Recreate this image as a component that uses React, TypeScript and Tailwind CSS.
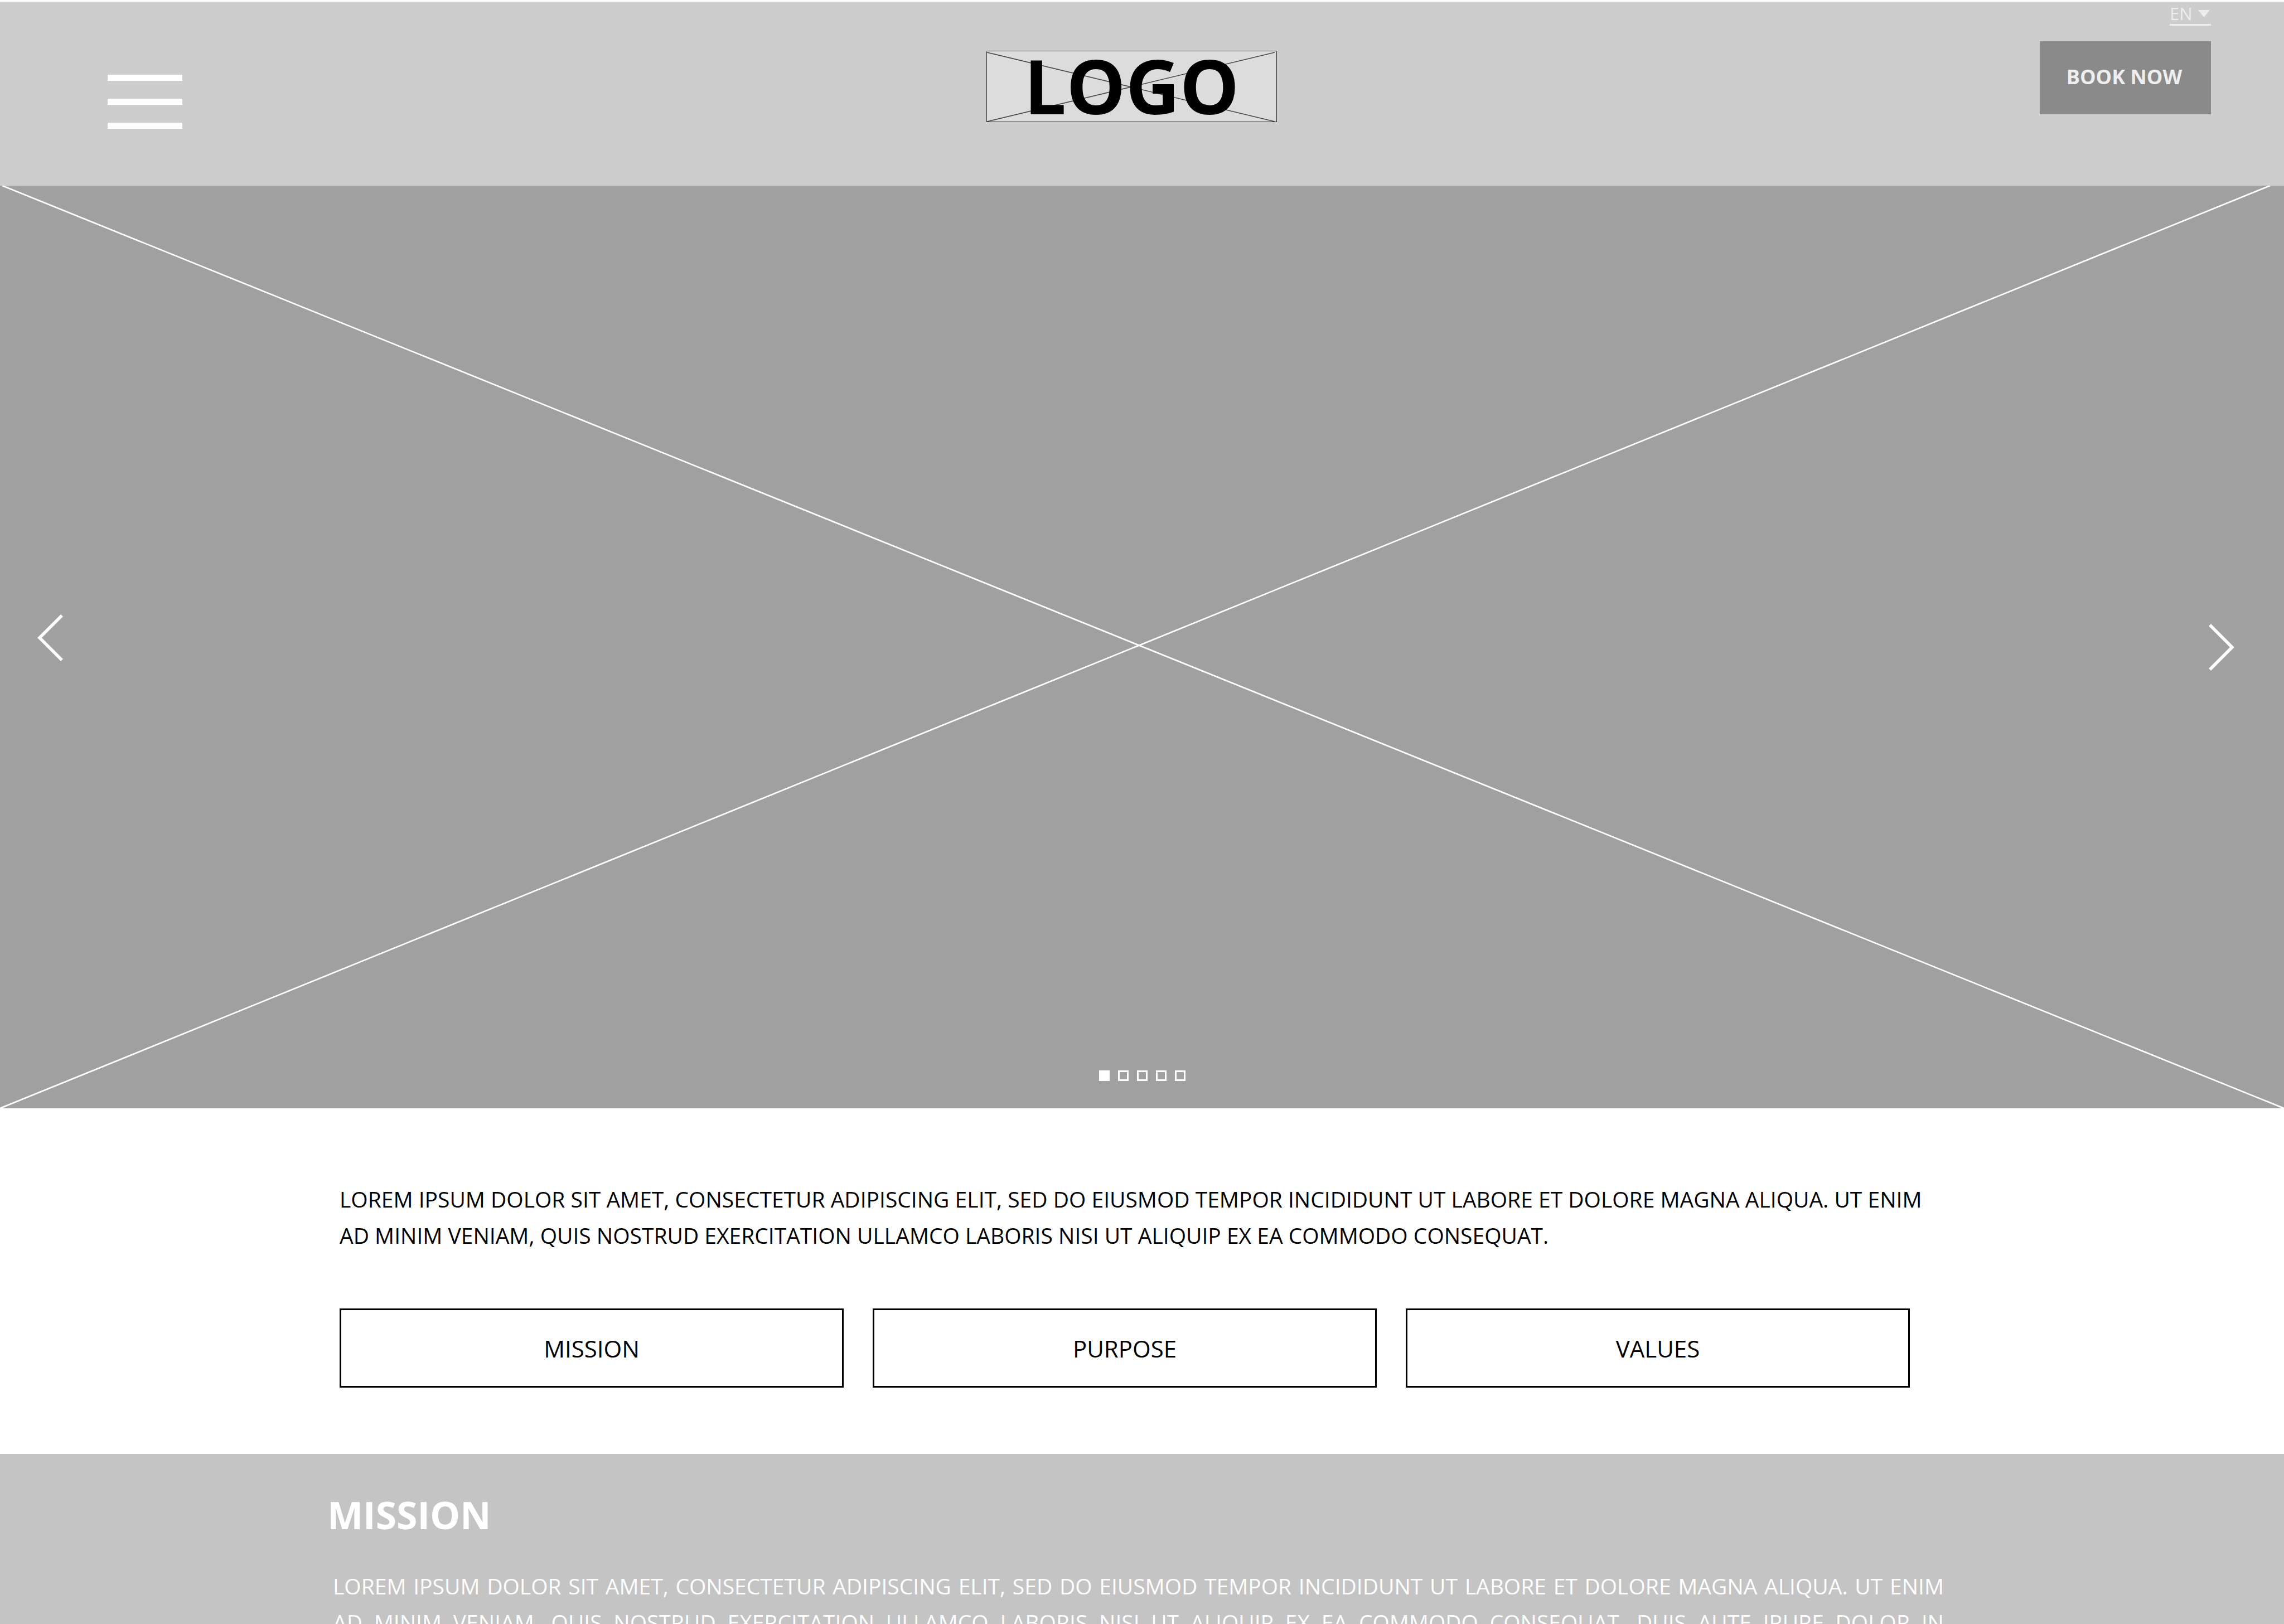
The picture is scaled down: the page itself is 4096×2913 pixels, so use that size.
import { useState } from "react";

const slides = [1, 2, 3, 4, 5];
const topics = ["MISSION", "PURPOSE", "VALUES"];

function Header() {
  return (
    <header className="grid min-h-[333px] grid-cols-[1fr_auto_1fr] items-start border-t-[3px] border-white bg-[#cdcdcd] pr-[131px] pl-[94px]">
      <button type="button" aria-label="Open menu" className="mt-[131px] ml-[99px] flex w-[134px] flex-col gap-8">
        <span className="h-[11px] w-full bg-white" />
        <span className="h-[11px] w-full bg-white" />
        <span className="h-[11px] w-full bg-white" />
      </button>

      <a
        href="#home"
        className="relative mt-[88px] flex h-32 w-[521px] items-center justify-center border border-[#303030] bg-[#dcdcdc] pb-1 text-black"
      >
        <svg className="absolute inset-0 h-full w-full" viewBox="0 0 519 126" preserveAspectRatio="none" aria-hidden="true">
          <path d="M0 2L516 126M0 126L516 2" stroke="#4a4a4a" strokeWidth="1.6" fill="none" />
        </svg>
        <span className="relative text-[134px] leading-none font-bold">LOGO</span>
      </a>

      <div className="flex flex-col items-end gap-7 justify-self-end">
        <div className="relative h-[43px] w-[74px] border-b-[3px] border-[#eeeeee] pt-[3px]">
          <select
            aria-label="Language"
            className="block h-[37px] w-full appearance-none bg-transparent text-[31px] leading-[37px] text-[#eeeeee]"
          >
            <option>EN</option>
          </select>
          <svg className="pointer-events-none absolute top-[15px] right-[2px] h-[13px] w-[21px]" viewBox="0 0 21 13" aria-hidden="true">
            <path d="M0 0H21L10.5 13Z" fill="#eeeeee" />
          </svg>
        </div>
        <button
          type="button"
          className="flex h-[131px] w-[307px] items-center justify-center bg-[#8a8a8a] pr-1 pb-1 text-[36px] leading-none font-bold text-[#eeeeee]"
        >
          BOOK NOW
        </button>
      </div>
    </header>
  );
}

function Hero() {
  const [active, setActive] = useState(0);
  const step = (n: number) => setActive((active + n + slides.length) % slides.length);

  return (
    <section aria-label="Gallery" className="relative flex aspect-[4096/1655] w-full items-center justify-between bg-[#a0a0a0] pr-[89px] pl-[67px]">
      <svg className="absolute inset-0 h-full w-full" viewBox="0 0 4096 1655" preserveAspectRatio="none" aria-hidden="true">
        <path d="M4 0L4096 1655M0 1655L4071 0" stroke="#fff" strokeWidth="2.7" fill="none" />
      </svg>
      <button type="button" aria-label="Previous slide" onClick={() => step(-1)} className="relative mb-[34px]">
        <svg className="block h-[90px] w-12" viewBox="0 0 48 90" aria-hidden="true">
          <path d="M44 5L4 45L44 85" stroke="#fff" strokeWidth="5.6" fill="none" />
        </svg>
      </button>
      <button type="button" aria-label="Next slide" onClick={() => step(1)} className="relative">
        <svg className="block h-[90px] w-12" viewBox="0 0 48 90" aria-hidden="true">
          <path d="M4 5L44 45L4 85" stroke="#fff" strokeWidth="5.6" fill="none" />
        </svg>
      </button>
      <div className="absolute inset-x-0 bottom-[49px] flex justify-center gap-[15px]">
        {slides.map((n, i) => (
          <button
            key={n}
            type="button"
            aria-label={`Slide ${n}`}
            onClick={() => setActive(i)}
            className={i === active ? "size-[19px] border-[3px] border-white bg-white" : "size-[19px] border-[3px] border-white"}
          />
        ))}
      </div>
    </section>
  );
}

function Intro() {
  return (
    <section className="bg-white pt-[130px] pr-[671px] pb-[119px] pl-[609px] text-black">
      <p className="text-[39px] leading-[65px] whitespace-nowrap">
        LOREM IPSUM DOLOR SIT AMET, CONSECTETUR ADIPISCING ELIT, SED DO EIUSMOD TEMPOR INCIDIDUNT UT LABORE ET DOLORE MAGNA ALIQUA. UT ENIM
        <br />
        AD MINIM VENIAM, QUIS NOSTRUD EXERCITATION ULLAMCO LABORIS NISI UT ALIQUIP EX EA COMMODO CONSEQUAT.
      </p>
      <div className="mt-[99px] grid grid-cols-3 gap-[52px]">
        {topics.map((topic) => (
          <button key={topic} type="button" className="h-[142px] border-[3px] border-black pt-0.5 text-[42px] leading-none">
            {topic}
          </button>
        ))}
      </div>
    </section>
  );
}

function Mission() {
  return (
    <section className="grow bg-[#c4c4c4] pt-[69px] pr-[610px] pl-[587px] text-white">
      <h2 className="text-[68px] leading-[80px] font-bold">MISSION</h2>
      <p className="mt-[55px] ml-[10px] text-justify text-[39px] leading-[65px] [text-align-last:justify]">
        LOREM IPSUM DOLOR SIT AMET, CONSECTETUR ADIPISCING ELIT, SED DO EIUSMOD TEMPOR INCIDIDUNT UT LABORE ET DOLORE MAGNA ALIQUA. UT ENIM
        <br />
        AD MINIM VENIAM, QUIS NOSTRUD EXERCITATION ULLAMCO LABORIS NISI UT ALIQUIP EX EA COMMODO CONSEQUAT. DUIS AUTE IRURE DOLOR IN
      </p>
    </section>
  );
}

export default function App() {
  return (
    <div className="flex h-screen flex-col overflow-hidden bg-white font-['Open_Sans','Noto_Sans',sans-serif] [&>*]:shrink-0">
      <Header />
      <Hero />
      <Intro />
      <Mission />
    </div>
  );
}
